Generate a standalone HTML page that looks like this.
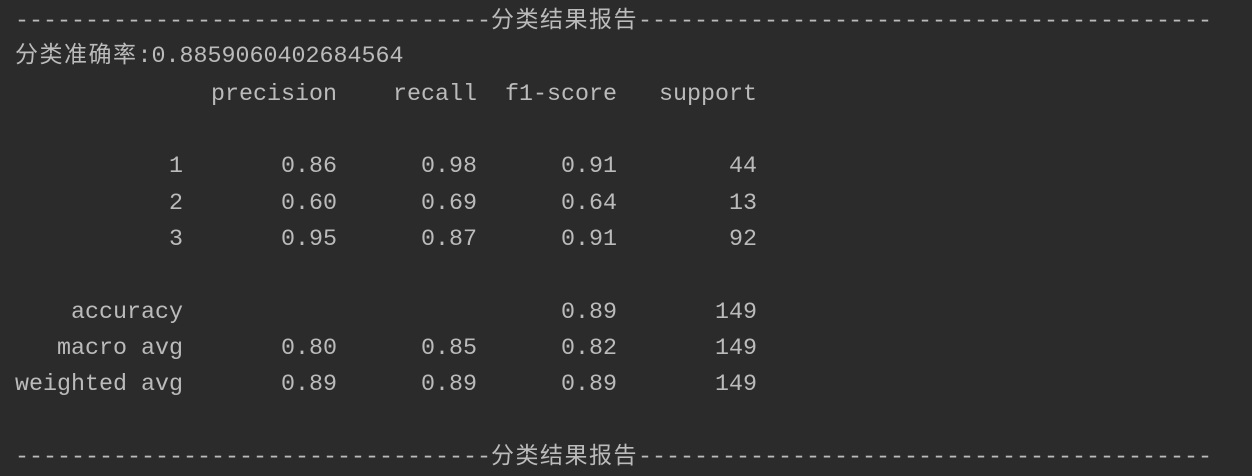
<!DOCTYPE html>
<html><head><meta charset="utf-8"><style>
html,body{margin:0;padding:0;background:#2b2b2b;}
body{width:1252px;height:473px;overflow:hidden;position:relative;}
.w{position:absolute;left:15px;top:4px;font-family:"Liberation Mono","Noto Sans CJK SC",monospace;font-size:23.33px;color:#bbbbbb;}
.w div{height:36.33px;line-height:36.33px;white-space:pre;overflow:visible;}
.w div.u5{position:relative;top:-5px;}
.w div.u6{position:relative;top:-6px;}
.c{font-family:"Noto Sans CJK SC","WenQuanYi Zen Hei",sans-serif;font-size:23px;letter-spacing:1.5px;}
</style></head><body>
<div class="w">
<div class="u5">----------------------------------<span class="c">分类结果报告</span>-----------------------------------------</div>
<div class="u6"><span class="c">分类准确率</span>:0.8859060402684564</div>
<div>              precision    recall  f1-score   support</div>
<div> </div>
<div>           1       0.86      0.98      0.91        44</div>
<div>           2       0.60      0.69      0.64        13</div>
<div>           3       0.95      0.87      0.91        92</div>
<div> </div>
<div>    accuracy                           0.89       149</div>
<div>   macro avg       0.80      0.85      0.82       149</div>
<div>weighted avg       0.89      0.89      0.89       149</div>
<div> </div>
<div class="u5">----------------------------------<span class="c">分类结果报告</span>-----------------------------------------</div>
</div>
</body></html>
